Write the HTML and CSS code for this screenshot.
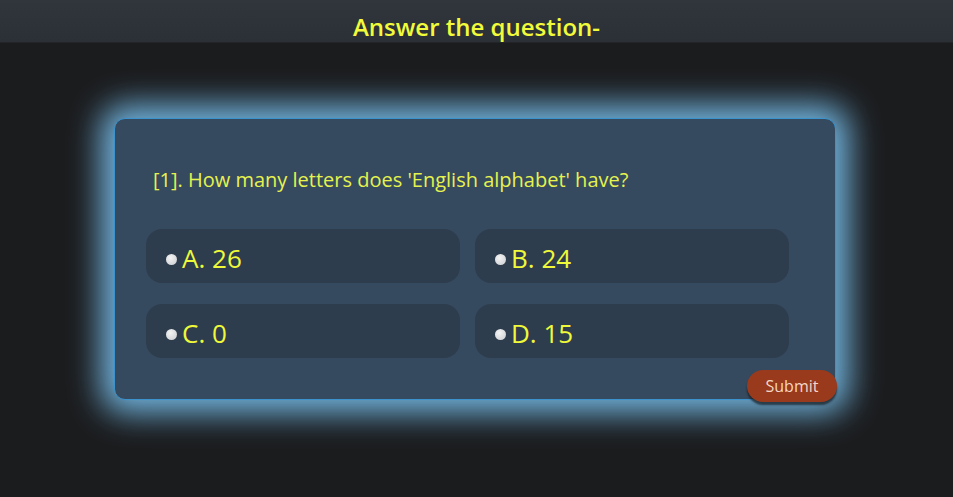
FILE: index.html
```html
<!DOCTYPE html>
<html>
<head>
<meta charset="utf-8">
<link rel="stylesheet" href="styles.css">
</head>
<body>
<header class="top">Answer the question-</header>
<main class="stage">
  <section class="card">
    <p class="question">[1]. How many letters does 'English alphabet' have?</p>
    <div class="options">
      <label class="opt"><span class="dot"></span>A. 26</label>
      <label class="opt"><span class="dot"></span>B. 24</label>
      <label class="opt"><span class="dot"></span>C. 0</label>
      <label class="opt"><span class="dot"></span>D. 15</label>
    </div>
    <button class="submit">Submit</button>
  </section>
</main>
</body>
</html>
```
FILE: styles.css
```css
* { box-sizing: border-box; }
html, body { margin: 0; height: 100%; }
body {
  background: #1b1c1e;
  font-family: "Comic Sans MS", "Open Sans", sans-serif;
  overflow: hidden;
}
.top {
  height: 43px;
  background: linear-gradient(#31363d, #2b3037);
  color: #f2fb3a;
  font-size: 24px;
  font-weight: 600;
  text-align: center;
  line-height: 54px;
  border-bottom: 1px solid #222427;
}
.stage {
  display: flex;
  justify-content: flex-start;
  padding: 75px 0 0 114px;
}
.card {
  position: relative;
  width: 722px;
  height: 282px;
  background: #354a5f;
  border: 1px solid #3b92cc;
  border-radius: 11px;
  box-shadow: 0 0 32px 13px rgba(122, 194, 240, 0.92);
  padding: 0 0 0 31px;
}
.question {
  margin: 49px 0 0 7px;
  color: #e6f24e;
  font-size: 20px;
  line-height: 24px;
}
.options {
  margin-top: 37px;
  width: 643px;
  display: grid;
  grid-template-columns: 1fr 1fr;
  column-gap: 15px;
  row-gap: 21px;
}
.opt {
  height: 54px;
  background: #2e3d4e;
  border-radius: 16px;
  display: flex;
  align-items: center;
  padding-left: 20px;
  padding-top: 3px;
  color: #eef93a;
  font-size: 26px;
}
.dot {
  width: 11px;
  height: 11px;
  border-radius: 50%;
  background: radial-gradient(circle at 40% 35%, #f4f4f4, #c9cbcf);
  margin: 3px 5px 0 0;
}
.submit {
  position: absolute;
  right: -2px;
  bottom: -3px;
  width: 90px;
  height: 32px;
  border: none;
  border-radius: 16px;
  background: #9a3a1c;
  color: #f3d6c6;
  font-family: inherit;
  font-size: 16px;
  box-shadow: 0 3px 2px rgba(20, 25, 30, 0.7);
  padding: 0;
}
```
